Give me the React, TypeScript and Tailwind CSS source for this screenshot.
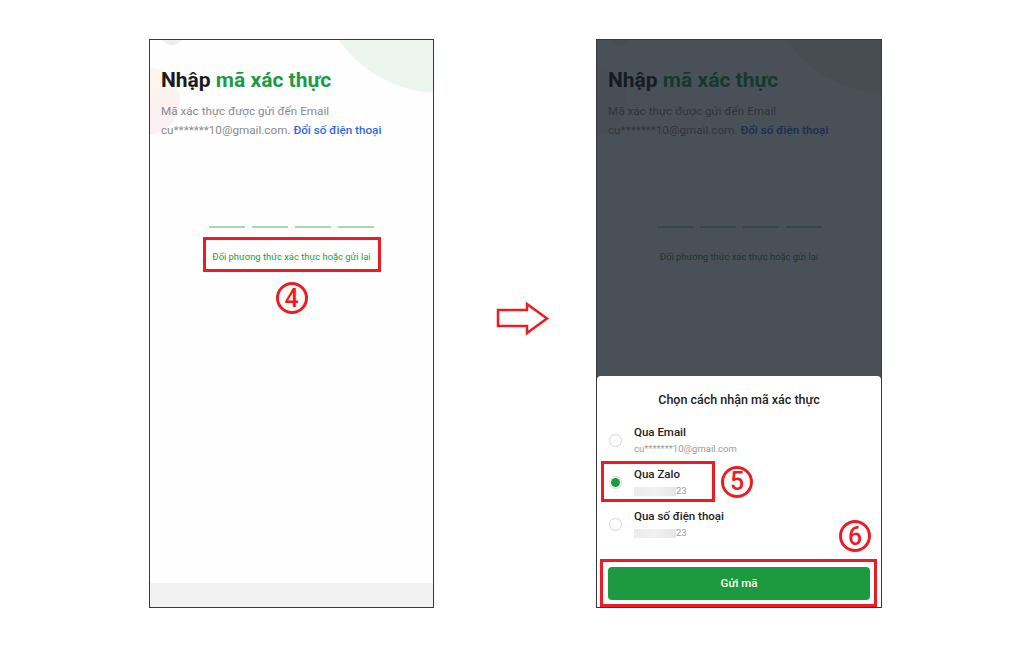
import React from 'react';

function Badge({ n }: { n: string }) {
  return (
    <div className="w-[32px] h-[32px] rounded-full border-[3px] border-[#ec1c24] flex items-center justify-center text-[#ec1c24] text-[25px] leading-none font-medium">
      {n}
    </div>
  );
}

function VerifyScreen({ marked }: { marked: boolean }) {
  return (
    <div className="relative h-full bg-[#fefefe] overflow-hidden">
      {/* background blobs */}
      <div className="absolute left-[10px] top-[-19px] w-[24px] h-[24px] rounded-full bg-[#eeeef1]" />
      <div className="absolute left-[-38px] top-[27px] w-[68px] h-[68px] rounded-full bg-gradient-to-b from-[#fdf7ea] to-[#f9eef5]" />
      <div className="absolute left-[167px] top-[-193px] w-[246px] h-[246px] rounded-full bg-[#ecf6ee]" />

      <div className="relative flex flex-col h-full">
        <h1 className="pt-[26px] pl-[11px] text-[21px] leading-[28px] font-bold text-[#1b1b1b]">
          Nhập <span className="text-[#1c9a45]">mã xác thực</span>
        </h1>
        <p className="mt-[8px] pl-[11px] text-[11.7px] leading-[19px] text-[#8b8b8b]">
          Mã xác thực được gửi đến Email
          <br />
          cu*******10@gmail.com. <span className="font-medium text-[#2e6be6]">Đổi số điện thoại</span>
        </p>

        {/* OTP inputs */}
        <div className="mt-[86px] flex justify-center gap-[7px]">
          <div className="w-[36px] h-[2px] bg-[#a6d9b0]" />
          <div className="w-[36px] h-[2px] bg-[#a6d9b0]" />
          <div className="w-[36px] h-[2px] bg-[#a6d9b0]" />
          <div className="w-[36px] h-[2px] bg-[#a6d9b0]" />
        </div>

        <div
          className={`mt-[9px] mx-auto w-[178px] h-[35px] pt-[5px] flex items-center justify-center border-[3px] ${
            marked ? 'border-[#ec1c24]' : 'border-transparent'
          }`}
        >
          <span className="text-[9.4px] text-[#1c9a45]">Đổi phương thức xác thực hoặc gửi lại</span>
        </div>
        {marked && (
          <div className="mt-[10px] flex justify-center">
            <Badge n="4" />
          </div>
        )}

        <div className="mt-auto h-[24px] bg-[#f2f2f2]" />
      </div>
    </div>
  );
}

function Radio({ checked }: { checked?: boolean }) {
  return (
    <div className="w-[13px] h-[13px] shrink-0 rounded-full border border-[#d6d6d6] bg-white flex items-center justify-center">
      {checked && <div className="w-[9px] h-[9px] rounded-full bg-[#1c9a45]" />}
    </div>
  );
}

function Masked() {
  return (
    <span className="flex items-center">
      <span className="inline-block w-[42px] h-[9px] bg-gradient-to-r from-[#ececec] via-[#f1f1f1] to-[#e6e6e6]" />
      <span>23</span>
    </span>
  );
}

function Option({ title, sub, checked }: { title: string; sub: React.ReactNode; checked?: boolean }) {
  return (
    <div className="flex items-center h-[32px]">
      <Radio checked={checked} />
      <div className="ml-[12px]">
        <div className="text-[11.5px] leading-[16px] font-medium text-[#222]">{title}</div>
        <div className="mt-[2px] text-[9.5px] leading-[14px] text-[#9a9a9a]">{sub}</div>
      </div>
    </div>
  );
}

function Sheet() {
  return (
    <div className="absolute left-0 right-0 bottom-0 h-[231px] bg-white rounded-t-[4px] flex flex-col">
      <div className="pt-[16px] text-center text-[12.5px] leading-[16px] font-medium text-[#222]">
        Chọn cách nhận mã xác thực
      </div>

      <div className="mt-[16px] pl-[12px]">
        <Option title="Qua Email" sub="cu*******10@gmail.com" />
      </div>

      <div className="mt-[5px] flex items-center">
        <div className="ml-[4px] w-[114px] border-[3px] border-[#ec1c24] pt-[2px] pb-[1px] pl-[5px]">
          <Option title="Qua Zalo" sub={<Masked />} checked />
        </div>
        <div className="ml-[6px]">
          <Badge n="5" />
        </div>
      </div>

      <div className="mt-[6px] pl-[12px]">
        <Option title="Qua số điện thoại" sub={<Masked />} />
      </div>

      <div className="absolute right-[10px] top-[144px]">
        <Badge n="6" />
      </div>

      <div className="mt-auto ml-[3px] mr-[4px] border-[3px] border-[#ec1c24] pt-[5px] pb-[4px] pl-[5px] pr-[4px]">
        <button className="w-full h-[33px] rounded-[4px] bg-[#1d9a3f] text-white text-[11.5px] font-medium">
          Gửi mã
        </button>
      </div>
    </div>
  );
}

export default function App() {
  return (
    <div className="w-[1024px] h-[647px] bg-white flex items-start pt-[39px] pl-[149px] font-['Roboto',sans-serif]">
      <div className="w-[285px] h-[569px] border border-[#3a3a3a]">
        <VerifyScreen marked />
      </div>

      <div className="w-[162px] pt-[263px] pl-[62px]">
        <svg width="54" height="34" viewBox="0 0 54 34" fill="none">
          <path
            d="M2 8 H31 V2 L51 16.5 L31 31 V24 H2 Z"
            stroke="#ec1c24"
            strokeWidth="2.5"
            strokeLinejoin="miter"
          />
        </svg>
      </div>

      <div className="relative w-[286px] h-[569px] border border-[#3a3a3a]">
        <VerifyScreen marked={false} />
        <div className="absolute inset-0 bg-[#141b26]/[0.77]" />
        <Sheet />
      </div>
    </div>
  );
}
